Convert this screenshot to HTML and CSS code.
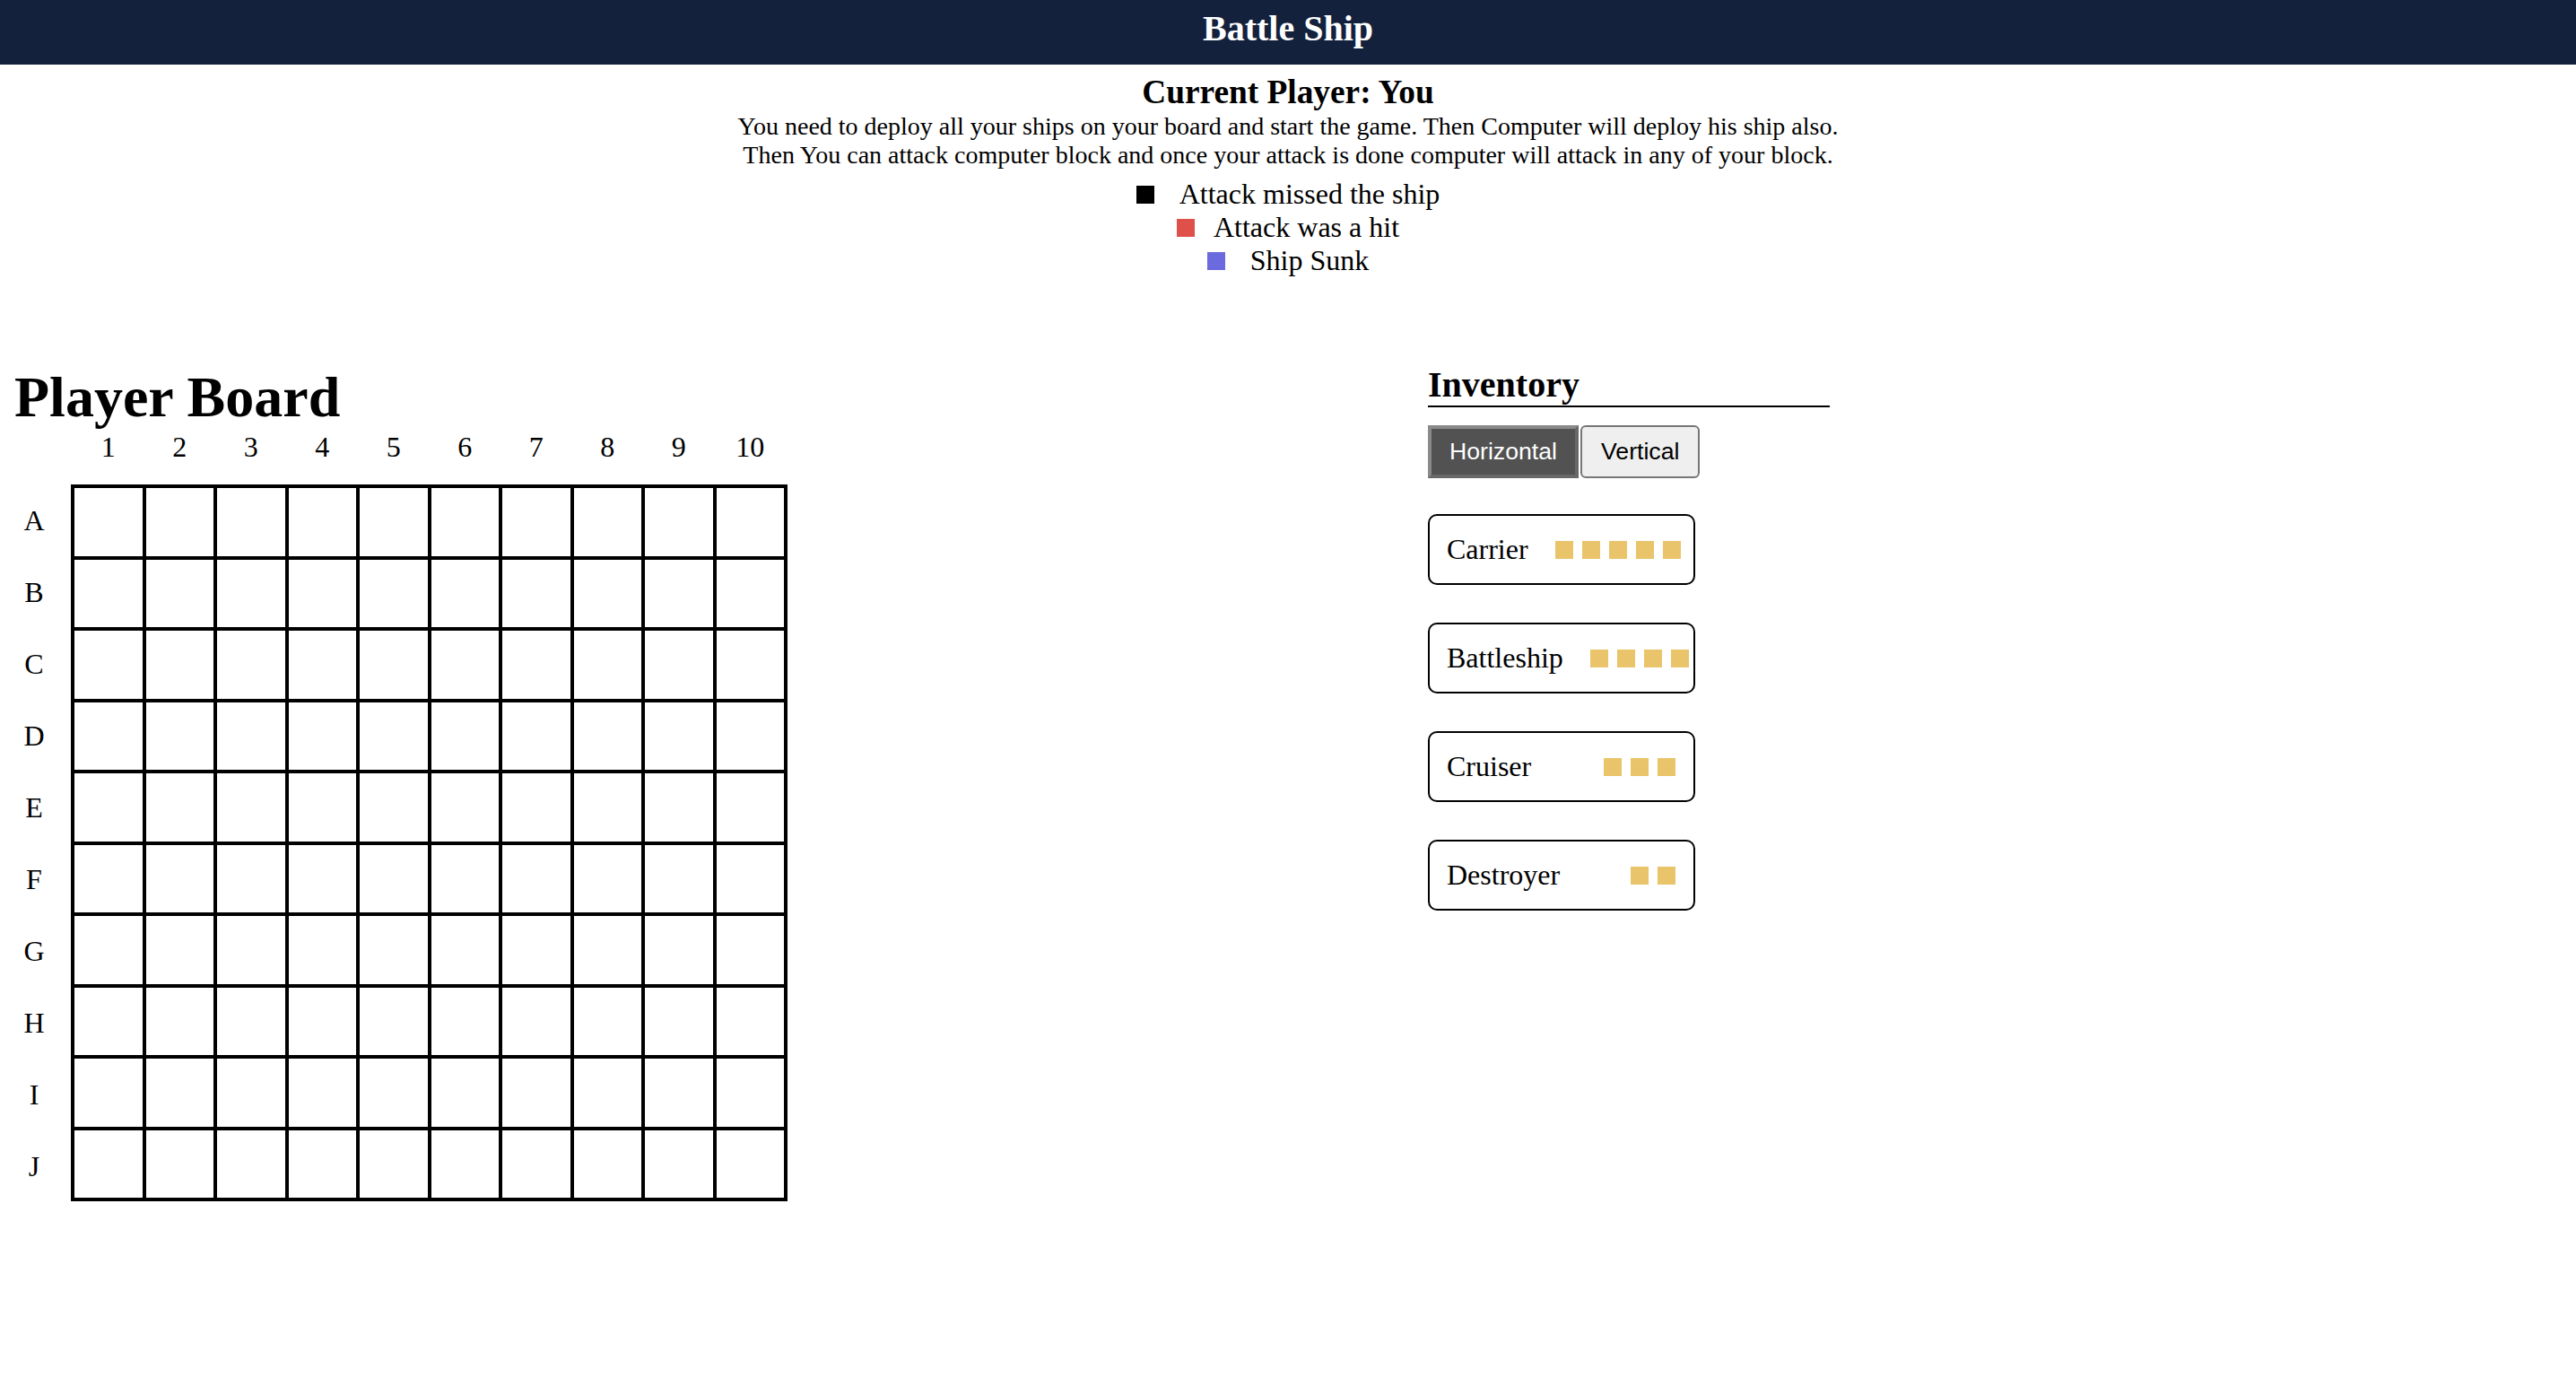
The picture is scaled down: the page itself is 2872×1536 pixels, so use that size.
FILE: index.html
```html
<!DOCTYPE html>
<html lang="en">
<head>
<meta charset="utf-8">
<title>Battle Ship</title>
<link rel="stylesheet" href="styles.css">
</head>
<body>
<header class="topbar">
  <h1 class="topbar-title">Battle Ship</h1>
</header>

<section class="status">
  <h2 class="status-title">Current Player: You</h2>
  <p class="status-text">You need to deploy all your ships on your board and start the game. Then Computer will deploy his ship also.<br>Then You can attack computer block and once your attack is done computer will attack in any of your block.</p>
  <ul class="legend">
    <li class="legend-item"><span class="swatch swatch-miss swatch-wide"></span>Attack missed the ship</li>
    <li class="legend-item"><span class="swatch swatch-hit"></span>Attack was a hit</li>
    <li class="legend-item"><span class="swatch swatch-sunk swatch-wide"></span>Ship Sunk</li>
  </ul>
</section>

<main class="game">
  <section class="board-section">
    <h1 class="board-title">Player Board</h1>
    <div class="col-labels">
      <span class="col-label">1</span><span class="col-label">2</span><span class="col-label">3</span><span class="col-label">4</span><span class="col-label">5</span><span class="col-label">6</span><span class="col-label">7</span><span class="col-label">8</span><span class="col-label">9</span><span class="col-label">10</span>
    </div>
    <div class="board-body">
      <div class="row-labels">
        <span class="row-label">A</span><span class="row-label">B</span><span class="row-label">C</span><span class="row-label">D</span><span class="row-label">E</span><span class="row-label">F</span><span class="row-label">G</span><span class="row-label">H</span><span class="row-label">I</span><span class="row-label">J</span>
      </div>
      <div class="grid">
        <div class="cell"></div><div class="cell"></div><div class="cell"></div><div class="cell"></div><div class="cell"></div><div class="cell"></div><div class="cell"></div><div class="cell"></div><div class="cell"></div><div class="cell"></div>
        <div class="cell"></div><div class="cell"></div><div class="cell"></div><div class="cell"></div><div class="cell"></div><div class="cell"></div><div class="cell"></div><div class="cell"></div><div class="cell"></div><div class="cell"></div>
        <div class="cell"></div><div class="cell"></div><div class="cell"></div><div class="cell"></div><div class="cell"></div><div class="cell"></div><div class="cell"></div><div class="cell"></div><div class="cell"></div><div class="cell"></div>
        <div class="cell"></div><div class="cell"></div><div class="cell"></div><div class="cell"></div><div class="cell"></div><div class="cell"></div><div class="cell"></div><div class="cell"></div><div class="cell"></div><div class="cell"></div>
        <div class="cell"></div><div class="cell"></div><div class="cell"></div><div class="cell"></div><div class="cell"></div><div class="cell"></div><div class="cell"></div><div class="cell"></div><div class="cell"></div><div class="cell"></div>
        <div class="cell"></div><div class="cell"></div><div class="cell"></div><div class="cell"></div><div class="cell"></div><div class="cell"></div><div class="cell"></div><div class="cell"></div><div class="cell"></div><div class="cell"></div>
        <div class="cell"></div><div class="cell"></div><div class="cell"></div><div class="cell"></div><div class="cell"></div><div class="cell"></div><div class="cell"></div><div class="cell"></div><div class="cell"></div><div class="cell"></div>
        <div class="cell"></div><div class="cell"></div><div class="cell"></div><div class="cell"></div><div class="cell"></div><div class="cell"></div><div class="cell"></div><div class="cell"></div><div class="cell"></div><div class="cell"></div>
        <div class="cell"></div><div class="cell"></div><div class="cell"></div><div class="cell"></div><div class="cell"></div><div class="cell"></div><div class="cell"></div><div class="cell"></div><div class="cell"></div><div class="cell"></div>
        <div class="cell"></div><div class="cell"></div><div class="cell"></div><div class="cell"></div><div class="cell"></div><div class="cell"></div><div class="cell"></div><div class="cell"></div><div class="cell"></div><div class="cell"></div>
      </div>
    </div>
  </section>

  <aside class="inventory">
    <h2 class="inventory-title">Inventory</h2>
    <div class="orientation">
      <button class="orient-btn orient-btn-active" type="button">Horizontal</button><button class="orient-btn orient-btn-idle" type="button">Vertical</button>
    </div>
    <div class="ships">
      <div class="ship"><span class="ship-name">Carrier</span><span class="ship-cells"><span class="ship-cell"></span><span class="ship-cell"></span><span class="ship-cell"></span><span class="ship-cell"></span><span class="ship-cell"></span></span></div>
      <div class="ship"><span class="ship-name">Battleship</span><span class="ship-cells"><span class="ship-cell"></span><span class="ship-cell"></span><span class="ship-cell"></span><span class="ship-cell"></span></span></div>
      <div class="ship"><span class="ship-name">Cruiser</span><span class="ship-cells"><span class="ship-cell"></span><span class="ship-cell"></span><span class="ship-cell"></span></span></div>
      <div class="ship"><span class="ship-name">Destroyer</span><span class="ship-cells"><span class="ship-cell"></span><span class="ship-cell"></span></span></div>
    </div>
  </aside>
</main>
</body>
</html>
```

FILE: styles.css
```css
* {
  box-sizing: border-box;
}

body {
  margin: 0;
  font-family: "Liberation Serif", "Times New Roman", serif;
  color: #000;
  background: #fff;
}

.topbar {
  height: 72px;
  padding-top: 9px;
  background: #14213d;
  text-align: center;
}

.topbar-title {
  margin: 0;
  font-size: 40px;
  line-height: 46px;
  font-weight: 700;
  color: #fff;
}

.status {
  padding-top: 9px;
  text-align: center;
}

.status-title {
  margin: 0;
  font-size: 37.33px;
  font-weight: 700;
  line-height: normal;
}

.status-text {
  margin: 1px 0 0;
  font-size: 28px;
  line-height: normal;
}

.legend {
  list-style: none;
  margin: 9px 0 0;
  padding: 0;
  font-size: 32px;
  line-height: normal;
}

.legend-item {
  text-align: center;
}

.swatch {
  display: inline-block;
  width: 20px;
  height: 20px;
  margin-right: 21px;
}

.swatch-wide {
  margin-right: 28px;
}

.swatch-miss {
  background: #000;
}

.swatch-hit {
  background: #e0504a;
}

.swatch-sunk {
  background: #6b6ade;
}

.game {
  display: grid;
  grid-template-columns: 1576px 448px;
  align-items: start;
  margin-top: 97px;
  padding-left: 16px;
}

.board-title {
  margin: 0;
  font-size: 64px;
  font-weight: 700;
  line-height: normal;
}

.col-labels {
  display: flex;
  padding-left: 65px;
  margin-bottom: 23px;
  font-size: 32px;
  line-height: normal;
}

.col-label {
  width: 79.5px;
  text-align: center;
}

.board-body {
  display: flex;
  align-items: flex-start;
  gap: 19px;
}

.row-labels {
  display: flex;
  flex-direction: column;
  width: 44px;
}

.row-label {
  display: flex;
  align-items: center;
  justify-content: center;
  height: 80px;
  font-size: 32px;
}

.grid {
  display: grid;
  grid-template-columns: repeat(10, 79.5px);
  grid-auto-rows: 79.5px;
  border: 2px solid #000;
}

.cell {
  border: 2px solid #000;
}

.inventory {
  margin-top: -1px;
}

.inventory-title {
  margin: 0;
  font-size: 40px;
  font-weight: 700;
  line-height: normal;
  border-bottom: 2px solid #000;
}

.orientation {
  display: flex;
  gap: 2px;
  margin-top: 20px;
}

.orient-btn {
  margin: 0;
  padding: 10px 20px;
  font-family: "Liberation Sans", Arial, sans-serif;
  font-size: 26.67px;
  line-height: normal;
}

.orient-btn-active {
  background: #525252;
  color: #fff;
  border: 4px solid;
  border-color: #8a8a8a #686868 #686868 #8a8a8a;
  border-radius: 0;
}

.orient-btn-idle {
  padding: 10px 21px;
  background: #efefef;
  color: #000;
  border: 2px solid #767676;
  border-radius: 6px;
}

.ships {
  display: flex;
  flex-direction: column;
  gap: 42px;
  margin-top: 40px;
}

.ship {
  display: flex;
  align-items: center;
  justify-content: space-between;
  width: 298px;
  height: 79px;
  padding: 0 20px 0 19px;
  border: 2px solid #000;
  border-radius: 10px;
  font-size: 32px;
}

.ship-name {
  white-space: nowrap;
}

.ship-cells {
  display: flex;
  gap: 10px;
  margin-left: 30px;
}

.ship-cell {
  flex: none;
  width: 20px;
  height: 20px;
  background: #e9c46a;
}
```
